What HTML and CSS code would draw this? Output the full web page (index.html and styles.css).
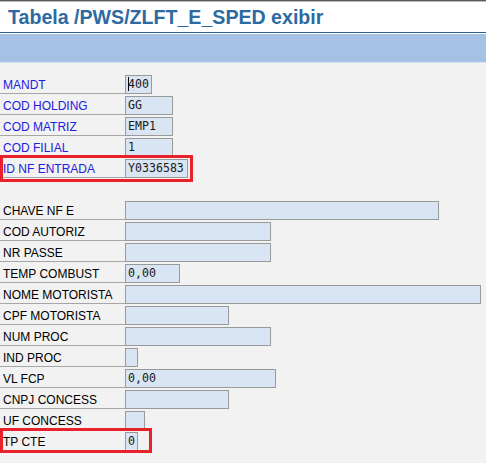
FILE: index.html
```html
<!DOCTYPE html>
<html>
<head>
<meta charset="utf-8">
<link rel="stylesheet" href="styles.css">
</head>
<body>
<div class="topline"></div>
<header class="titlebar"><h1 class="title">Tabela /PWS/ZLFT_E_SPED exibir</h1></header>
<div class="band"></div>
<main class="form">
  <div class="row"><span class="label key">MANDT</span><span class="field" style="width:27px"><span class="cursor"></span>400</span></div>
  <div class="row"><span class="label key">COD HOLDING</span><span class="field" style="width:48px">GG</span></div>
  <div class="row"><span class="label key">COD MATRIZ</span><span class="field" style="width:48px">EMP1</span></div>
  <div class="row"><span class="label key">COD FILIAL</span><span class="field" style="width:48px">1</span></div>
  <div class="row"><span class="label key">ID NF ENTRADA</span><span class="field" style="width:63px">Y0336583</span></div>
  <div class="row blank"></div>
  <div class="row"><span class="label">CHAVE NF E</span><span class="field" style="width:314px"></span></div>
  <div class="row"><span class="label">COD AUTORIZ</span><span class="field" style="width:146px"></span></div>
  <div class="row"><span class="label">NR PASSE</span><span class="field" style="width:146px"></span></div>
  <div class="row"><span class="label">TEMP COMBUST</span><span class="field" style="width:55px">0,00</span></div>
  <div class="row"><span class="label">NOME MOTORISTA</span><span class="field" style="width:356px"></span></div>
  <div class="row"><span class="label">CPF MOTORISTA</span><span class="field" style="width:104px"></span></div>
  <div class="row"><span class="label">NUM PROC</span><span class="field" style="width:146px"></span></div>
  <div class="row"><span class="label">IND PROC</span><span class="field" style="width:13px"></span></div>
  <div class="row"><span class="label">VL FCP</span><span class="field" style="width:151px">0,00</span></div>
  <div class="row"><span class="label">CNPJ CONCESS</span><span class="field" style="width:104px"></span></div>
  <div class="row"><span class="label">UF CONCESS</span><span class="field" style="width:20px"></span></div>
  <div class="row"><span class="label">TP CTE</span><span class="field" style="width:13px">0</span></div>
  <div class="mark mark-id"></div>
  <div class="mark mark-tp"></div>
</main>
</body>
</html>
```

FILE: styles.css
```css
html, body {
  margin: 0;
  padding: 0;
}
body {
  background: #f2f2f2;
  width: 486px;
  height: 463px;
  overflow: hidden;
  font-family: "Liberation Sans", Arial, sans-serif;
}
.topline {
  height: 1px;
  background: #5a5a5a;
  border-bottom: 1px solid #b8b8b8;
}
.titlebar {
  background: #ffffff;
  box-sizing: border-box;
  height: 31px;
  border-bottom: 1px solid #2b5f93;
}
.title {
  margin: 0;
  padding: 0 0 0 8px;
  font-size: 19.6px;
  font-weight: bold;
  color: #2d6aa2;
  line-height: 31px;
}
.band {
  border-top: 1px solid #ffffff;
  height: 28px;
  background: #a5c2e4;
  border-bottom: 1px solid #d6e4f3;
}
.form {
  position: relative;
  padding-top: 12px;
}
.row {
  display: flex;
  height: 19px;
  margin-bottom: 2px;
}
.label {
  box-sizing: border-box;
  width: 125px;
  flex: none;
  height: 19px;
  padding-left: 3px;
  border-bottom: 1px solid #a6a6a6;
  font-size: 12px;
  line-height: 20px;
  color: #000000;
  white-space: nowrap;
}
.label.key {
  color: #2020e0;
}
.field {
  box-sizing: border-box;
  height: 19px;
  flex: none;
  background: #d9e5f3;
  border: 1px solid #9a9a9a;
  padding-left: 2px;
  font-family: "DejaVu Sans Mono", "Liberation Mono", monospace;
  font-size: 11.6px;
  line-height: 17px;
  color: #1a1a1a;
  white-space: nowrap;
  overflow: hidden;
}
.cursor {
  display: inline-block;
  width: 1px;
  height: 14px;
  background: #000;
  vertical-align: -3px;
  margin-right: -1px;
}
.mark {
  position: absolute;
  left: 0;
  border: 3px solid #e8212b;
  box-sizing: border-box;
}
.mark-id {
  top: 92px;
  width: 193px;
  height: 27px;
}
.mark-tp {
  top: 365px;
  width: 152px;
  height: 25px;
}
```
